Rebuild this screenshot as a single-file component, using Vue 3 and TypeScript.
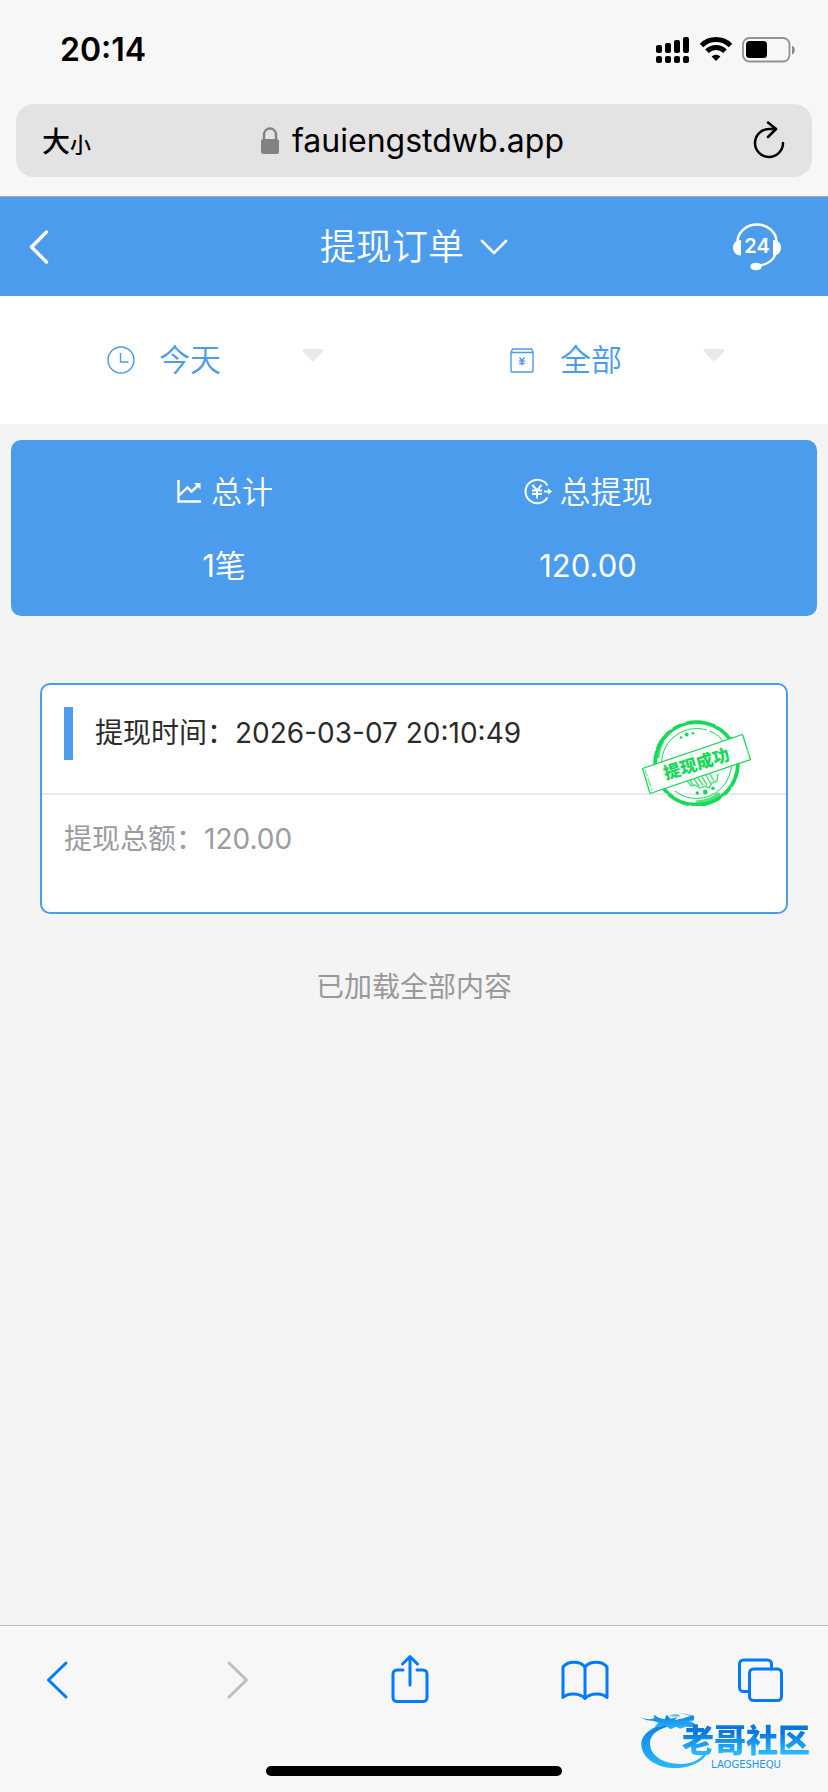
<script setup lang="ts">
import { ref } from 'vue'

interface Order {
  time: string
  amount: string
  status: string
}

const address = ref('fauiengstdwb.app')
const period = ref('今天')
const kind = ref('全部')
const periods: string[] = ['今天', '昨天', '七天']
const kinds: string[] = ['全部', '成功', '失败']
const orders: Order[] = [{ time: '2026-03-07 20:10:49', amount: '120.00', status: '提现成功' }]
</script>

<template>
  <div class="screen">
    <div class="status">
      <time class="clock">20:14</time>
      <div class="signals">
        <svg width="34" height="28" viewBox="0 0 34 28" aria-hidden="true">
          <rect x="0" y="9" width="6" height="8" rx="2" />
          <rect x="9" y="7" width="6" height="10" rx="2" />
          <rect x="18" y="4" width="6" height="13" rx="2" />
          <rect x="27" y="1" width="6" height="16" rx="2" />
          <rect x="0" y="20" width="6" height="7" rx="2" />
          <rect x="9" y="20" width="6" height="7" rx="2" />
          <rect x="18" y="20" width="6" height="7" rx="2" />
          <rect x="27" y="20" width="6" height="7" rx="2" />
        </svg>
        <svg width="32" height="28" viewBox="0 0 32 28" aria-hidden="true">
          <path d="M1.500 9.500a20.500 20.500 0 0 1 29 0" fill="none" stroke="#000" stroke-width="5" />
          <path d="M7 15.300a12.600 12.600 0 0 1 18 0" fill="none" stroke="#000" stroke-width="5" />
          <path d="M16 25l-4.400-4.400a6.200 6.200 0 0 1 8.800 0z" />
        </svg>
        <svg width="54" height="28" viewBox="0 0 54 28" aria-hidden="true">
          <rect x="1" y="2" width="46.500" height="23.500" rx="6.500" fill="none" stroke="#939393" stroke-width="1.800" />
          <rect x="4" y="5" width="21" height="17" rx="3.500" />
          <path d="M50 9.500v9a5 5 0 0 0 0-9z" fill="#8a8a8a" />
        </svg>
      </div>
    </div>

    <div class="address-row">
      <div class="address">
        <button class="plain textsize" type="button"><span>大</span><small>小</small></button>
        <label class="url">
          <svg width="20" height="28" viewBox="0 0 20 28" role="img" aria-label="安全连接">
            <path d="M4 13V7.500a6 6 0 0 1 12 0V13" fill="none" stroke="#828285" stroke-width="2.400" />
            <rect x="1" y="12" width="18" height="15" rx="2.500" fill="#828285" />
          </svg>
          <input v-model="address" type="text" aria-label="网址" />
        </label>
        <button class="plain reload" type="button" aria-label="重新加载">
          <svg width="34" height="40" viewBox="0 0 34 40" fill="none" stroke="#000" stroke-width="2.500" stroke-linecap="round" stroke-linejoin="round">
            <path d="M31 22A14 14 0 1 1 17 8h7" />
            <path d="M16 1.500l8 6.500-8 8" />
          </svg>
        </button>
      </div>
    </div>

    <header class="header">
      <button class="plain back" type="button" aria-label="返回">
        <svg width="22" height="36" viewBox="0 0 22 36" fill="none" stroke="#fff" stroke-width="3.400" stroke-linecap="round" stroke-linejoin="round">
          <path d="M18.500 3L3.500 18l15 15" />
        </svg>
      </button>
      <button class="plain title" type="button">
        <h1>提现订单</h1>
        <svg width="28" height="18" viewBox="0 0 28 18" fill="none" stroke="#fff" stroke-width="2.600" stroke-linecap="round" stroke-linejoin="round">
          <path d="M2 3l12 12L26 3" />
        </svg>
      </button>
      <button class="plain service" type="button" aria-label="24小时客服">
        <svg width="50" height="48" viewBox="0 0 50 48" fill="none">
          <path d="M5.500 19a19.500 17.500 0 0 1 39 0" stroke="#fff" stroke-width="2.600" />
          <path d="M44 30a19.500 17 0 0 1-18 12.500" stroke="#fff" stroke-width="2.200" />
          <path d="M9 17c-5 0-8 3-8 7.500s3 8 8 8z" fill="#fff" />
          <path d="M41 17c5 0 8 3 8 7.500s-3 8-8 8z" fill="#fff" />
          <ellipse cx="24" cy="43.500" rx="5.800" ry="3.800" fill="#fff" />
          <text x="25" y="30" text-anchor="middle" class="hours">24</text>
        </svg>
      </button>
    </header>

    <main class="main">
      <div class="filters">
        <label class="filter">
          <svg width="28" height="28" viewBox="0 0 28 28" fill="none" stroke="#4b9cec" stroke-width="1.400">
            <circle cx="14" cy="14" r="13" />
            <path d="M13.500 7v9h8" />
          </svg>
          <select v-model="period" aria-label="时间">
            <option v-for="item in periods" :key="item">{{ item }}</option>
          </select>
          <svg class="caret" width="22" height="14" viewBox="0 0 22 14" aria-hidden="true">
            <path d="M2 0h18q3 1 .5 3l-9.500 10-9.500-10Q-1 1 2 0z" fill="#e9e9e9" />
          </svg>
        </label>
        <label class="filter">
          <svg width="28" height="28" viewBox="0 0 28 28" fill="none" stroke="#4b9cec" stroke-width="1.400">
            <path d="M3 6.500L4.500 3h19L25 6.500V25a1 1 0 0 1-1 1H4a1 1 0 0 1-1-1zM3 6.500h22" />
            <path d="M11.500 11.500l2.500 3 2.500-3M14 14.500v5M11.200 15h5.600M11.200 17.500h5.600" />
          </svg>
          <select v-model="kind" aria-label="类型">
            <option v-for="item in kinds" :key="item">{{ item }}</option>
          </select>
          <svg class="caret" width="22" height="14" viewBox="0 0 22 14" aria-hidden="true">
            <path d="M2 0h18q3 1 .5 3l-9.500 10-9.500-10Q-1 1 2 0z" fill="#e9e9e9" />
          </svg>
        </label>
      </div>

      <section class="summary">
        <div class="stat">
          <div class="stat-name">
            <svg width="28" height="28" viewBox="0 0 28 28" fill="none" stroke="#fff" stroke-width="2.400">
              <path d="M3.500 2v21.500H26" />
              <path d="M4 17.500l8.500-8 4 4 6.500-6" />
              <path d="M19 5h6.500v6.500z" fill="#fff" stroke="none" />
            </svg>
            <span>总计</span>
          </div>
          <div class="stat-value">{{ orders.length }}笔</div>
        </div>
        <div class="stat">
          <div class="stat-name">
            <svg width="28" height="28" viewBox="0 0 28 28" fill="none" stroke="#fff" stroke-width="2">
              <path d="M23.500 7.500a11.800 11.800 0 1 0 0 12" />
              <path d="M8.500 7l4.500 5.500L17.500 7M13 12.500v8M8 12.500h10M8 16h10" />
              <path d="M20 13.500h5" />
              <path d="M24 10.300l4 3.200-4 3.200z" fill="#fff" stroke="none" />
            </svg>
            <span>总提现</span>
          </div>
          <div class="stat-value">120.00</div>
        </div>
      </section>

      <article v-for="order in orders" :key="order.time" class="order">
        <div class="order-head">
          <span class="mark"></span>
          <span>提现时间：{{ order.time }}</span>
        </div>
        <div class="order-body">提现总额：{{ order.amount }}</div>
        <svg class="stamp" width="112" height="88" viewBox="0 0 112 88" role="img" :aria-label="order.status">
          <g fill="none" stroke="#17d958">
            <circle cx="56.500" cy="45.500" r="41" stroke-width="3" />
            <circle cx="56.500" cy="45.500" r="42.500" stroke-width="1.500" stroke-dasharray="24 3 9 5 31 2" />
            <path d="M22 23a41 41 0 0 0-5 17M80 76a39 39 0 0 1-24 9M90 20l5 9" stroke-width="5" opacity=".75" />
            <circle cx="56.500" cy="45.500" r="35" stroke-width="1" stroke-dasharray="78 7 90 3" />
          </g>
          <g fill="#17d958">
            <circle cx="41" cy="19.500" r="1.300" />
            <circle cx="46.700" cy="16.500" r="1.900" />
            <circle cx="53" cy="15.300" r="1.300" />
            <circle cx="57.300" cy="75" r="1.700" />
            <circle cx="65.300" cy="74" r="2.400" />
            <circle cx="73" cy="70.300" r="1.700" />
          </g>
          <path d="M44 61l5 4 2 3 4-1 5 3 5-2 4 2 3-5 5-2 1-7M50 62l3 5M54 61l5 7M58 60l5 7M62 59l5 8M66 57l5 9M70 56l4 7" fill="none" stroke="#4be27d" stroke-width="1.500" />
          <path d="M2.500 50.500L102.500 16.500l8 25L10 75.500z" fill="#fff" stroke="#17d958" stroke-width="1.300" />
          <path d="M5 51.500l7 21M107 31l2 8" fill="none" stroke="#7deca0" stroke-width="1.500" stroke-dasharray="7 2 9 2" />
          <text x="56.500" y="52" text-anchor="middle" transform="rotate(-17 56.500 46)" class="stamp-text">{{ order.status }}</text>
        </svg>
      </article>

      <p class="end">已加载全部内容</p>
    </main>

    <footer class="footer">
      <nav class="toolbar" aria-label="浏览器工具栏">
        <button class="plain" type="button" aria-label="后退">
          <svg width="48" height="56" viewBox="0 0 48 56"><path d="M30 11L12.500 28 30 45" /></svg>
        </button>
        <button class="plain" type="button" aria-label="前进" disabled>
          <svg class="off" width="48" height="56" viewBox="0 0 48 56"><path d="M18 11l17.500 17L18 45" /></svg>
        </button>
        <button class="plain" type="button" aria-label="分享">
          <svg width="48" height="56" viewBox="0 0 48 56">
            <path d="M17 18h-6a4 4 0 0 0-4 4v23.500a4 4 0 0 0 4 4h26a4 4 0 0 0 4-4V22a4 4 0 0 0-4-4h-6" />
            <path d="M24 33V5M16.500 12L24 4.500l7.500 7.500" />
          </svg>
        </button>
        <button class="plain" type="button" aria-label="书签">
          <svg width="48" height="56" viewBox="0 0 48 56">
            <path d="M24 46.500V15C19 8.500 7 8.500 2 15v30.500C7 40.500 19 41 24 46.500 29 41 41 40.500 46 45.500V15C41 8.500 29 8.500 24 15" />
          </svg>
        </button>
        <button class="plain" type="button" aria-label="标签页">
          <svg width="48" height="56" viewBox="0 0 48 56">
            <rect x="13.500" y="17" width="32" height="31.500" rx="4" />
            <path d="M35.500 17v-5a4 4 0 0 0-4-4h-24a4 4 0 0 0-4 4v23.500a4 4 0 0 0 4 4h6" />
          </svg>
        </button>
      </nav>
      <div class="home"></div>
      <div class="watermark">
        <svg class="dragon" width="80" height="60" viewBox="0 0 240 180" aria-hidden="true">
          <defs>
            <linearGradient id="dragon-fill" x1="0" y1="0" x2="0" y2="1">
              <stop offset="0" stop-color="#0d7fe2" />
              <stop offset="1" stop-color="#2ab8fc" />
            </linearGradient>
          </defs>
          <g fill="url(#dragon-fill)">
            <path d="M104 36C40 44 4 72 4 102c0 46 54 76 112 72 48-4 84-26 90-60-18 32-46 48-84 48-58 0-92-28-92-62 0-32 36-50 84-56z" />
            <path d="M0 22q28 10 44 2l-4-10q18 12 34 14l6-14 12 12 20-4-8 8 20-4 36-10q6 6 2 14l-18 4 20 6-4 12-22-2-18 6-12-6-16 8-18-12-14 6-16-2 12-12-18-6Q20 34 0 22z" />
            <path d="M100 8q46 2 62 10l-4 4Q136 10 100 8zM86 18q24-12 36 0l-10 3zM128 36l34-8-4 8z" opacity=".6" />
          </g>
        </svg>
        <div class="wordmark">
          <strong>老哥社区</strong>
          <span>LAOGESHEQU</span>
        </div>
      </div>
    </footer>
  </div>
</template>

<style>
body {
  margin: 0;
  background: #f4f4f4;
}
</style>

<style scoped>
.screen {
  display: flex;
  flex-direction: column;
  min-height: 100vh;
  background: #f4f4f4;
  color: #2b2b2b;
  font-family: Inter, "Noto Sans CJK SC", sans-serif;
  font-size: 28px;
  line-height: 40px;
}

.plain {
  display: flex;
  align-items: center;
  justify-content: center;
  margin: 0;
  padding: 0;
  border: 0;
  background: none;
  color: inherit;
  font: inherit;
}

svg {
  display: block;
  flex: none;
}

.status {
  display: flex;
  align-items: center;
  justify-content: space-between;
  height: 104px;
  box-sizing: border-box;
  padding: 0 32px 4px 60px;
  background: #f7f7f7;
  color: #000;
}

.clock {
  font-size: 32px;
  font-weight: 600;
}

.signals {
  display: flex;
  align-items: center;
  gap: 10px;
}

.address-row {
  padding: 0 16px 19px;
  background: #f7f7f7;
}

.address {
  display: grid;
  grid-template-columns: 1fr auto 1fr;
  align-items: center;
  height: 73px;
  padding: 0 26px;
  border-radius: 18px;
  background: #e3e3e3;
  color: #000;
}

.textsize {
  justify-self: start;
  align-items: baseline;
  padding-top: 6px;
  font-size: 28px;
  font-weight: 500;
}

.textsize small {
  font-size: 21px;
}

.url {
  display: flex;
  align-items: center;
  gap: 12px;
}

.url input {
  width: 276px;
  padding: 0;
  border: 0;
  outline: 0;
  background: none;
  color: #000;
  font-family: inherit;
  font-size: 32px;
  line-height: 40px;
}

.reload {
  justify-self: end;
}

.header {
  display: grid;
  grid-template-columns: 1fr auto 1fr;
  align-items: center;
  height: 99px;
  padding: 0 28px;
  border-top: 1px solid #a9a9a9;
  background: #4b9cec;
  color: #fff;
}

.back {
  justify-self: start;
}

.title {
  gap: 16px;
}

.title h1 {
  margin: 0;
  font-size: 36px;
  font-weight: 350;
  line-height: 48px;
}

.service {
  justify-self: end;
  margin-right: 18px;
}

.hours {
  fill: #fff;
  font-size: 20px;
  font-weight: 600;
}

.filters {
  display: grid;
  grid-template-columns: 1fr 1fr;
  height: 128px;
  padding: 0 13px;
  background: #fff;
}

.filter {
  display: flex;
  align-items: center;
  padding: 0 90px 0 94px;
  color: #4b9cec;
}

.filter select {
  flex: 1;
  min-width: 0;
  margin: 0 0 0 24px;
  padding: 0;
  border: 0;
  outline: 0;
  background: none;
  color: inherit;
  appearance: none;
  font-family: inherit;
  font-size: 31px;
  font-weight: 350;
  line-height: 44px;
}

.caret {
  margin-bottom: 8px;
}

.summary {
  display: grid;
  grid-template-columns: 1fr 1fr;
  margin: 16px 11px 0;
  padding: 28px 47px 26px 31px;
  border-radius: 10px;
  background: #4b9cec;
  color: #fff;
  font-size: 31px;
  line-height: 48px;
}

.stat {
  display: flex;
  flex-direction: column;
  align-items: center;
  gap: 26px;
}

.stat-name {
  display: flex;
  align-items: center;
  gap: 8px;
  font-weight: 350;
}

.order {
  position: relative;
  margin: 67px 40px 0;
  border: 2px solid #4b9cec;
  border-radius: 10px;
  background: #fff;
}

.order-head {
  display: flex;
  gap: 22px;
  padding: 22px 22px 33px;
  border-bottom: 2px solid #e9e9e9;
  line-height: 53px;
}

.mark {
  width: 9px;
  height: 53px;
  background: #4b9cec;
}

.order-body {
  padding: 24px 22px 53px;
  color: #9b9ba0;
}

.stamp {
  position: absolute;
  top: 33px;
  right: 34px;
}

.stamp-text {
  fill: #17d958;
  font-family: "Noto Sans CJK SC", sans-serif;
  font-size: 17px;
  font-weight: 900;
}

.end {
  margin: 53px 0;
  color: #999;
  text-align: center;
}

.footer {
  position: relative;
  margin-top: auto;
  padding-bottom: 16px;
  border-top: 1px solid #bdbdbd;
  background: #f7f7f7;
}

.toolbar {
  display: flex;
  justify-content: space-between;
  padding: 26px 44px 58px 36px;
}

.toolbar svg {
  fill: none;
  stroke: #007aff;
  stroke-width: 3;
  stroke-linecap: round;
  stroke-linejoin: round;
}

.toolbar .off {
  stroke: #bfbfbf;
}

.home {
  width: 296px;
  height: 10px;
  margin: 0 auto;
  border-radius: 5px;
  background: #000;
}

.watermark {
  position: absolute;
  right: 18px;
  bottom: 22px;
  display: flex;
  width: 170px;
  justify-content: flex-end;
}

.dragon {
  position: absolute;
  left: 0;
  bottom: 0;
}

.wordmark {
  position: relative;
  display: flex;
  flex-direction: column;
  align-items: center;
  gap: 2px;
  color: #1b95ec;
}

.wordmark strong {
  background: linear-gradient(#0878de 25%, #2ab8fc 85%);
  background-clip: text;
  color: transparent;
  font-size: 32px;
  font-weight: 900;
  line-height: 34px;
}

.wordmark span {
  font-family: "DejaVu Sans", sans-serif;
  font-size: 10px;
  line-height: 10px;
}
</style>
